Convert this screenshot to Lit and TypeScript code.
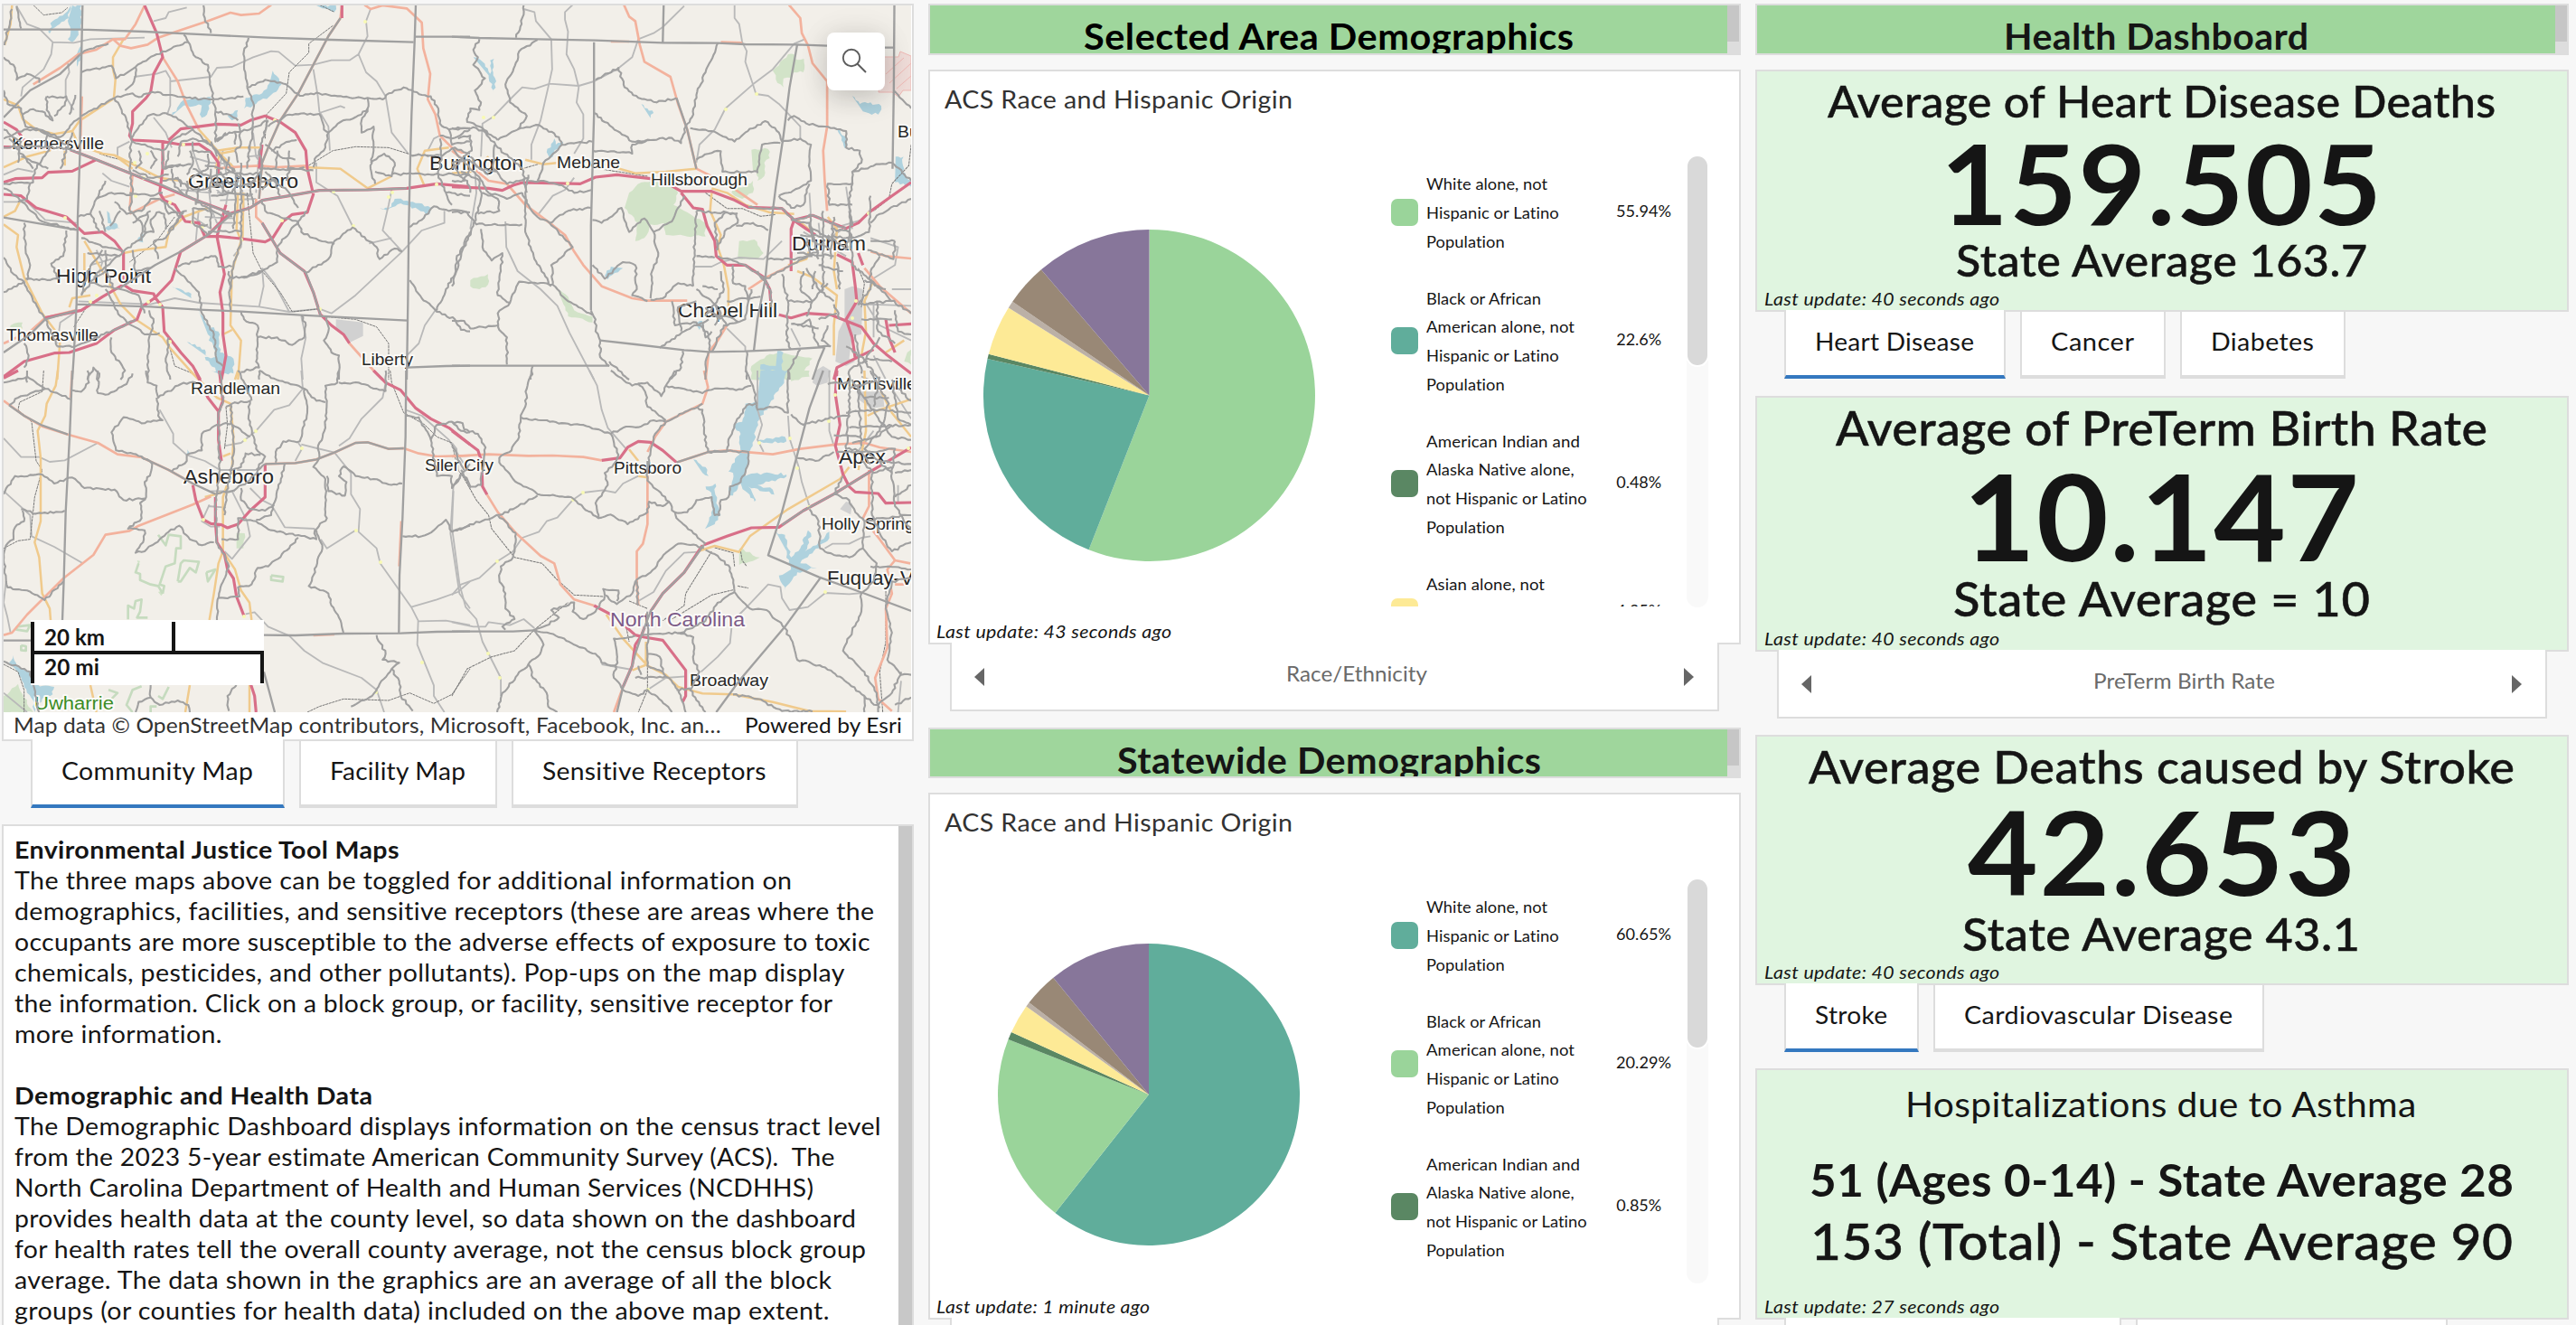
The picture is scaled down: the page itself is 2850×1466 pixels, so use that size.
import { LitElement, html, svg, css } from "lit";
import { customElement, property } from "lit/decorators.js";

/* ---------- text set to a fixed measure ---------- */
@customElement("fit-text")
class FitText extends LitElement {
  @property({ type: Number }) span = 0;
  static styles = css`
    :host { display: inline-block; white-space: pre; flex: none; text-align: left; }
    .ink { display: inline-block; transform-origin: 0 50%; }
  `;
  firstUpdated() {
    const ink = this.renderRoot.querySelector(".ink") as HTMLElement;
    const natural = ink.getBoundingClientRect().width;
    if (!this.span || !natural) return;
    const n = [...(this.textContent ?? "")].length;
    /* a third of the slack goes to tracking, the rest to the glyph width */
    const tracking = (this.span - natural) / 3 / n;
    ink.style.letterSpacing = `${tracking.toFixed(3)}px`;
    const tracked = natural + tracking * n;
    ink.style.transform = `scaleX(${(this.span / (tracked - tracking)).toFixed(4)})`;
    this.style.width = `${this.span}px`;
  }
  render() { return html`<span class="ink"><slot></slot></span>`; }
}

/* ---------- map geometry: one sheet per quadrant ---------- */
type Sheet = {
  at: string;
  water: string; green: string; works: string;
  county: string; tract: string; minor: string; rail: string;
  red: string; salmon: string; orange: string;
};

const SHEETS: Sheet[] = [
  {
    at: "scale(.33333)",
    water: `160,105 175,70 215,45 235,18 228,60 190,85 165,112;240,18 270,18 268,95 240,140 225,130 235,100 225,70;255,180 270,150 268,200 255,222;570,385 600,340 640,325 700,322 690,370 665,400 670,350 610,350;905,235 935,280 900,315 850,345 810,360 815,325 870,310 895,275;755,385 790,365 785,395 770,400;340,755 385,740 400,760 360,765;355,700 365,720 372,750 358,740;455,800 475,775 475,805;1260,690 1290,690 1310,660 1370,670 1430,690 1425,712 1330,675 1285,698;570,950 635,975 635,990;655,1020 690,1080 725,1100 730,1170 775,1190 775,1240 730,1245 680,1185 720,1185 690,1110;620,1135 680,1160 690,1185;1050,18 1115,18 1110,40 1070,28`,
    green: `35,1080 75,1070 75,1090 50,1100 30,1110`,
    works: `1115,1060 1205,1070 1205,1115 1165,1135 1115,1090`,
    county: `274,16 268,300 265,520 258,720 254,1010 245,1180 240,1260;12,98 270,98 480,105 700,116 890,125 1100,132 1372,140;1380,16 1376,140 1366,380 1362,520 1357,740 1354,1000 1350,1260;1376,122 1560,122;254,1010 500,1018 660,1028 800,1034 1000,1046 1160,1054 1352,1064;1350,1220 1480,1215 1560,1214;12,722 254,763;220,492 320,530 440,578 540,615 640,660 770,710;12,390 100,300 200,245 265,182;1130,60 1090,120 1040,215 990,310 930,400 890,490 870,540 860,660;870,740 930,840 1015,905 1040,970 1065,1050;690,780 600,835 515,880 400,955;690,780 770,710 830,690 870,665 960,650 1060,632 1220,630 1350,625;12,1170 100,1110 150,1060 254,1030`,
    tract: `55,20 70,95;40,30 15,150;12,190 50,225 55,265 90,245 130,260 130,275;265,182 290,165 360,145;12,300 25,345 70,360 85,420 130,430 200,455 240,410 270,390;155,320 155,365 175,400 140,370 110,362 75,380;155,320 190,325 220,320 215,350 180,385;250,315 230,380;270,240 300,232 370,218 385,260 450,222 520,180 625,140 610,115;450,222 445,270 415,300;625,140 650,190 690,215 700,290 715,370 715,470 750,440;675,16 680,60 700,110;825,125 808,180 820,290;808,320 770,325 705,330 620,325 560,315 505,305 460,322 440,310 380,325 270,385;820,290 840,340 838,420;820,290 880,265 950,280 995,318 1060,310 1100,318 1180,325 1220,325 1270,330 1290,310 1340,290 1400,315 1430,320 1455,360 1460,410 1490,430 1560,425;380,325 420,400 435,460 430,560 440,640 430,700;435,460 490,385 550,375;550,375 600,400 640,430 720,500 780,570;640,430 580,460 540,500 540,560;715,370 760,380 790,400;1220,325 1220,370 1200,400 1200,440 1240,420 1240,480 1230,560 1245,610;960,380 1060,378 1075,430 1090,440 1130,405 1200,380 1220,360;890,420 960,380;1090,440 1080,490 1050,520 1040,555;900,500 960,470 985,465;12,490 110,486 220,492;12,460 80,430 130,430;12,610 110,605 115,565 165,490;12,625 60,655 140,735 254,763;80,740 85,830 100,880 90,930;220,765 210,850 170,875 195,925 130,930 85,925;12,855 45,910 80,935 110,1000 150,1060 190,1150;258,720 300,710 320,660 350,600;300,710 330,770;330,700 350,770;400,700 365,750;270,790 340,820 410,835 470,790 490,770;380,670 420,710 470,700 500,660 530,660;490,710 480,770 510,770 500,730 520,705 545,710 550,760;530,660 600,720 550,790 510,800;510,800 525,860;12,970 80,935;190,1150 250,1150 300,1130 400,1085 450,1060;270,980 330,900 410,835;350,960 400,1050 480,1110 530,1105;580,890 660,970 670,1040 710,1110 720,1200 740,1215;590,885 700,850 715,850 725,885 770,885;765,920 820,920 870,900 920,870 920,820;1015,905 1090,860 1110,800 1170,755 1250,820 1260,860 1310,825 1335,835;990,735 1000,770 1040,790 1110,810;990,735 920,820;990,735 1020,700;870,665 880,700 940,725 990,735;1355,755 1400,730 1440,685 1470,695 1560,705;1360,930 1400,990 1450,1035 1510,1060 1530,1095 1560,1100;1450,1030 1480,960 1510,910 1515,860 1560,770;800,1035 810,1060 855,1080 855,1120 920,1120 970,1145 1010,1120 1015,1080 1000,1046;855,1120 850,1200 860,1220 800,1235;1085,1050 1090,1100 1075,1130 1100,1170 1125,1180 1125,1260;495,1030 510,1070 495,1120 490,1260;80,1140 95,1180 80,1220;290,1260 310,1220 330,1240 325,1260;400,1260 415,1230 370,1170 370,1120;560,1120 550,1200 565,1260;1230,540 1275,510 1310,540 1300,585 1245,570;1300,578 1420,578 1560,580;1360,515 1460,515;1460,460 1465,520 1455,580 1480,640 1560,650;1480,640 1500,680;1460,450 1500,460 1560,430;1465,520 1510,490 1560,510;630,500 640,545 620,580;635,545 580,550 545,555;690,510 690,560 630,590;680,550 740,560;760,520 750,560 800,590;780,500 790,540;860,500 870,560 820,620;830,480 820,560;920,500 915,560;960,500 955,560 1010,555;620,600 620,650;660,620 650,680;700,680 700,760;640,690 700,700;770,640 700,650;740,600 740,640;660,750 690,745;690,770 800,768;860,560 1040,565;780,600 780,700 775,760;830,600 840,680;560,500 550,555;460,500 470,540 450,560;500,500 520,530 500,560;540,600 590,590 600,620;790,410 800,480 780,500;840,420 830,500;890,400 870,470 860,500;880,480 930,520 980,530;720,470 760,440 830,430 890,400;900,600 870,630;440,565 500,590 560,580;580,590 640,630 690,625 740,610;700,600 760,640 830,650;640,560 700,590 770,570;880,570 960,640;960,640 990,690;640,470 640,500 700,505;600,470 590,520;440,470 470,480 540,500;320,660 370,640 440,650;350,830 350,900 380,960;290,840 400,850;430,700 470,740 470,800;440,830 450,900 500,890;400,960 460,980 480,1040;240,440 200,560;130,430 220,480;70,520 160,560;30,460 110,560;100,605 90,660 60,670;545,670 560,710 620,700;620,650 690,690 740,720;1490,430 1500,480 1560,470;1500,540 1540,600 1560,560;730,570 760,610 800,620 850,600;760,570 810,580 860,575;700,560 700,640;720,560 720,620;800,540 800,700;770,560 790,600 770,640;740,700 770,720;640,690 640,740 690,780;600,470 640,460 700,480 750,540;570,560 580,620 620,650;540,560 600,545;860,600 910,600 930,650;780,440 780,480;700,470 720,520;960,560 950,600;560,770 610,700;870,900 800,920;430,640 500,650 540,640;440,740 500,700;340,830 290,900 270,980;300,940 400,960;350,900 310,920;760,900 765,1030;12,430 70,470 60,540;160,440 150,490;800,700 800,800 775,880 765,960`,
    minor: `55,20 90,80 130,95 175,140 245,142 300,130 480,125;175,140 170,180 145,230 75,290 70,320;620,25 560,40 550,60 510,70;225,210 230,240 218,265 218,320 245,365;445,255 520,245 550,235 565,260 565,350 555,380;565,270 700,255 720,225 770,222 840,190 900,170 925,172 980,218 1040,215 1100,200 1160,200 1190,180 1220,120 1215,70 1230,30;1190,180 1215,240 1250,270 1280,320 1300,440 1355,510;1040,230 1055,320 1060,370 1090,420 1095,500;1050,540 1050,605 1120,650 1170,750;1300,630 1290,680 1270,765 1335,835;1225,808 1300,790;1475,700 1475,740 1400,765 1335,835 1180,980 1100,1040 1060,1025 960,1035 860,1018 660,1005 580,990 500,1010 260,1000;860,1018 875,950 870,890;870,890 910,940 960,1035;510,390 550,440 570,490;340,575 370,600;1060,375 1130,352 1145,358;1000,1050 1015,1120 1000,1190 1005,1260;1445,1030 1410,1080 1390,1140 1350,1180;640,500 660,560 690,600 740,650;650,640 720,600 740,500;840,440 850,520 880,560;720,640 840,645;730,665 850,660;760,620 750,680;800,580 810,700;660,690 650,800;700,690 720,740 800,740;800,790 800,820 775,850;370,600 430,620;320,830 340,870 320,930;300,880 370,860;190,1140 200,1070 260,1030;12,670 90,670 150,730 254,740;1420,500 1440,460 1460,450;390,520 390,490 430,470;600,630 700,640;12,580 60,560 110,570;680,720 780,725;740,520 760,620;860,500 850,640;630,520 700,540 770,545;690,600 700,690;820,520 870,515;640,720 700,760`,
    rail: `110,16 145,50 205,42 225,25;1105,85 1025,145 1025,175 960,240 950,310 885,380 880,460;1015,555 1105,500 1180,487 1290,490 1370,515 1430,515;820,640 840,840 870,900 930,970 970,1035 1060,1025;1065,1050 1180,1060 1250,1085 1290,1140 1290,1260;330,510 360,520 440,540 500,580;245,1085 300,1000;580,720 520,800 430,870;560,1140 580,1215 640,1240;1060,16 1110,40`,
    red: `480,18 520,110 540,190 510,245 500,305 485,325 440,370 440,410 430,450 440,465 540,470 600,480 660,478 700,505 725,540 725,580;12,405 55,430 80,465;12,488 220,492 320,530 440,578 530,615 640,660 760,705;12,605 50,593 140,590 160,572 240,568 320,530;12,645 70,650 120,690 220,720 280,775 340,770 380,800 410,840 410,945 440,965 510,975 515,988;540,470 540,560 530,640 545,665 580,680 615,735 660,740 680,785 730,785 800,792 880,803 905,790 940,735 970,712 1020,705 1040,645 1020,560 1015,500 980,440 930,405 880,385 830,400 800,415 720,412 600,428 560,465;750,680 720,785 735,860 745,910 730,970 740,1040 740,1110 750,1180 735,1260;690,780 760,710 830,690 870,665 960,650 1060,632 1220,630 1350,625 1450,610 1560,620;1065,1045 1100,1080 1140,1110 1160,1140;870,740 930,840 1010,900 1040,970 1065,1050;690,780 600,835 570,930 515,988;515,988 540,1020 545,1100 600,1170 640,1215 665,1260;515,988 470,1020 455,1060 380,1095 320,1140 230,1170 180,1172 80,1200 12,1250;410,945 340,985 270,1030 150,1055;1240,1230 1270,1260;1135,16 1135,60;870,480 860,560`,
    salmon: `900,16 860,45 800,50 765,42 690,70 600,100 525,125 490,148 435,160 400,152 375,130 320,165 260,180 200,225 110,280;480,18 450,80 415,130 375,130;540,190 590,270 620,350 660,430;1210,16 1230,30 1270,18 1350,28 1400,75 1405,160 1428,245 1420,330 1445,380 1460,450 1500,490 1560,520;1135,16 1130,60 1090,120 1040,215 990,310 930,400 890,490 870,540 860,660;850,660 850,720 870,740;720,560 760,555 860,550 920,555 1020,550;430,710 530,660 580,645;1160,1140 1240,1230;12,1140 100,1100 150,1055 250,1030;440,578 430,700;272,320 266,500`,
    orange: `410,130 375,190 375,230 383,265 378,325;40,16 35,80 15,150;12,330 60,350 75,395 120,430 180,445 240,435 265,400 380,325;12,555 90,520 165,500 200,470;215,500 215,550;380,515 440,545 530,590 600,600;240,435 260,480 340,510 380,515 440,560;12,720 50,700 65,670;12,745 60,780 55,820 80,920 140,1040 200,1120 190,1260;1010,555 1130,560 1220,625 1300,585;1410,620 1385,560 1410,500 1490,490;410,840 460,830 550,820 560,770 610,720 690,690;230,1020 240,990 300,980;280,800 340,900 400,1010 450,1060 540,1120 560,1150 640,1240;790,640 785,760 800,800 770,900 765,1080 800,1130 790,1260;660,430 740,520 780,560;720,500 790,490 870,490;808,640 805,800;740,1110 770,1095;280,840 280,970;780,500 730,510 715,560`,
  },
  {
    at: "translate(500 0) scale(.33806 .33333)",
    water: `70,190 100,205 125,245 125,200 138,195 135,250 145,270 135,310 120,250;620,345 640,360 660,375 650,392;1310,318 1335,345 1370,340 1405,352 1395,380 1345,370;1255,415 1270,430 1295,480 1285,492 1265,440;310,505 335,460 340,480 365,470 320,525;1452,520 1478,520 1475,570 1503,600 1503,620 1450,605;500,915 520,885 560,890 510,928;1065,1165 1085,1170 1080,1260 1000,1260 1010,1210 1060,1215;795,1070 820,1065 810,1095`,
    green: `1050,235 1075,205 1100,180 1120,180 1122,195 1152,195 1150,240 1120,240 1110,258 1085,260 1085,290 1065,275 1060,250;980,497 1035,495 1040,525 1022,540 1022,585 1000,600 1000,570 985,565;580,640 620,605 700,600 740,640 725,680 760,700 830,740 830,785 700,780 695,740 650,745 630,790 600,800 610,740 565,690;920,625 960,620 985,600 985,640 950,660 915,640;940,800 990,795 1020,840 1000,860 935,860;60,930 118,910 118,945 90,960 60,950;345,960 380,985 400,1030 460,1050 460,1070 380,1050 365,1010;1000,1200 1040,1175 1100,1175 1180,1190 1150,1240 1120,1260 980,1260 980,1215;1490,1170 1503,1160 1503,1210 1480,1200`,
    works: `1285,960 1310,950 1345,960 1340,1110 1310,1115 1300,1190 1320,1200 1290,1215 1255,1200 1265,1100 1285,1060;1190,1230 1215,1215 1240,1230 1230,1260 1190,1260`,
    county: `0,122 90,126 280,130 470,134 690,142 870,143 960,147 1130,148 1230,152;1415,158 1446,158;465,140 465,380 460,560 455,750 455,1030;693,16 690,140;1130,148 1105,290 1085,450 1060,620 1040,780 1025,930 1000,1060 988,1165;1448,16 1446,300 1442,560;485,1130 600,1143 760,1162 840,1168 960,1166 1100,1160 1220,1152;0,1214 515,1214;735,325 770,430 800,560;1220,1152 1200,1200 1180,1260`,
    tract: `455,1030 470,1060 470,1100 485,1130 485,1185 515,1215;235,16 228,80 210,125;90,130 70,165 85,190 70,215 108,260 75,300 95,340 90,365 60,360 50,405 90,420 150,465;280,132 220,170 215,200 175,280 190,340 245,385 215,430 150,465;215,430 285,415 350,455 360,480 460,470;465,375 500,405 590,470 650,465 720,458 750,475 765,420 790,380 800,315 830,240 870,143;470,265 545,225 565,290 610,325 670,340 735,325;780,425 850,435 925,470 960,440 1025,402 1070,440 1080,470;0,425 80,425 110,440 150,490 230,560 245,640;1080,470 1140,460 1175,480 1170,540 1175,600 1100,640 1070,650;1000,575 1015,480 1075,475;800,530 840,510 880,502 885,570 1000,570;1100,400 1120,385 1160,410 1220,420 1290,435 1290,490 1335,500 1340,540 1310,570 1400,545 1440,540 1503,600;1310,600 1300,680 1310,750;1310,570 1310,610 1230,610 1235,680 1310,680;1070,650 1110,690 1150,680 1170,610;460,500 560,505 590,510 590,480 650,465;0,490 80,580 120,640 180,660 230,640;20,460 60,450 65,500 0,560;90,600 95,660 70,750 30,850 0,950;0,705 50,705 80,745 230,745;250,580 240,640 240,770 270,860 325,950;330,945 220,935 190,1005 150,980 160,900 165,840 130,865 100,820 95,760;230,640 255,690 280,720 320,740 395,820 350,860 325,880 330,945 380,1000 460,1045;320,740 380,700 455,690;460,630 400,640 360,615 300,600 250,600;190,1005 150,1040 155,1095 180,1120 180,1210;0,1065 40,1065 60,1090 150,1080;460,730 490,740 555,690 580,770 630,725 660,770 720,735 740,690 760,650;660,770 675,850 655,900 650,990;460,880 500,925 560,870 600,880 605,960 590,980 640,1000;790,950 795,800 800,700;650,995 690,990 740,940 790,950;800,700 860,705 900,705 935,708;865,830 900,760 935,740 930,710 895,705 860,740 870,830;930,750 985,740 1035,765;720,1000 730,1080 800,1070 840,1110 845,1168;680,1155 760,1100 840,1060;850,1168 890,1080 960,1060 980,960;800,960 860,1010 830,1050;880,900 890,960 860,1010 900,1080;920,880 920,940 960,950 970,1000;1000,900 1020,930 1110,880 1200,830;870,850 960,880 1020,920 1045,970 1045,1020;1110,1160 1095,1130 1100,1000 1080,910;1100,1000 1180,1000 1230,940;1200,1090 1110,1075;1140,1160 1100,1230 1105,1260;965,1166 965,1260;755,1165 750,1220 710,1260;265,1214 258,1260;515,1200 560,1245 580,1260;840,1168 830,1200 830,1260;1110,730 1170,740 1200,860;1170,710 1180,800 1240,830;1250,720 1240,860;1215,700 1215,900;1140,780 1320,790;1130,840 1250,850;1300,700 1310,880 1370,930 1430,990 1503,1040;1370,650 1365,770 1310,790;1503,660 1400,710 1370,740;1450,800 1370,800;1450,800 1445,860 1360,830;1160,890 1200,960 1250,1000;1260,870 1270,960;1200,880 1280,900;1370,900 1370,960 1330,1010 1440,1000;1390,1000 1395,1100 1450,1140;1320,1110 1340,1240;1230,1080 1210,1130 1240,1150;1290,1150 1360,1200;1400,1120 1350,1200 1400,1260;1445,300 1503,360;970,688 1080,692 1120,730 1180,715 1230,735 1290,758;1035,860 1110,860 1180,850;900,1000 960,990 1010,985;750,1100 740,1020 800,1000;820,1070 830,1120 850,1100;850,1050 900,1050 940,1070;140,480 135,560 180,610 250,590;0,540 50,530 120,580;100,640 150,660 155,700 85,710;360,480 300,540 280,600;1150,900 1140,960 1180,1000 1160,1050;1200,1060 1260,1040;1180,1100 1200,1150 1240,1150;1450,1030 1460,1100 1503,1110;1300,1230 1360,1190 1440,1200;1230,780 1290,830;60,520 90,560 150,570;30,570 90,600;0,600 50,600 60,640;860,1010 880,1040 860,1080;830,1020 880,1060;1240,760 1300,770 1290,830;1180,760 1250,800;1160,790 1170,850;1190,900 1180,960;1220,900 1210,970;800,850 860,855;1250,1010 1270,1060;1350,930 1420,960;1400,850 1370,900;1340,1060 1440,1060;1130,1080 1170,1060 1180,1100;820,950 870,960`,
    minor: `235,30 270,40 275,70 325,130 328,230 315,290 290,400 260,480 260,530;395,16 370,40 370,65 380,105 375,180 400,230 415,290 408,340 430,380 430,460 400,510;135,388 190,330 230,290 270,295 320,278 415,285 465,270 540,230 590,190 610,130 660,110 690,90 760,20;135,388 100,410 95,520;925,16 925,60 940,80 950,140 965,170 960,205 985,280 995,312 1035,318 1070,345 1140,420 1140,460;1155,130 1120,145 1050,230 985,280 895,360 860,430 810,480 800,540;175,735 178,820 215,900 290,960 345,1015 385,1105 465,1260;280,715 330,650 370,630 400,590;900,1090 960,1150 960,1166;795,885 850,885 880,870 940,855 1020,860 1080,800;1370,930 1450,880 1460,820 1370,790;1360,1010 1503,1015;1110,1090 1140,1150;75,560 80,640 60,760;1170,640 1175,720;1290,620 1310,760;1350,1000 1400,1080 1503,1130;1440,960 1503,960;1380,1180 1420,1260;1200,740 1210,830;1240,760 1340,730;1150,770 1290,850;1190,820 1280,760;1380,1010 1380,1120`,
    rail: `480,560 640,585;830,640 900,692 950,692 1010,718 1060,712;1503,480 1495,550 1440,610 1430,660 1380,700;1330,890 1350,940 1340,1020;230,560 300,540`,
    red: `0,620 120,625 165,632 200,615 230,606 420,610 470,588 540,580 650,593 690,600 750,635 850,635 920,662 970,688 1080,692 1120,730 1180,715 1230,735 1290,758 1330,740 1365,705 1440,650 1503,605;750,640 790,690 820,695 835,750 860,800 865,850 900,880 960,880 1020,920 1040,960 1045,1020;1120,730 1110,760 1110,900;1260,845 1310,870 1320,950 1325,1000 1290,1060 1310,1120 1320,1190;1070,1045 1110,1055 1160,1040 1240,1045 1290,1065 1340,1085 1380,1140 1420,1175 1503,1240;1330,840 1345,880;1420,1060 1430,1120 1450,1170;1430,1080 1503,1075;1250,1260 1260,1220 1320,1190 1380,1160;1110,725 1160,760 1190,780`,
    salmon: `563,16 580,55 600,70 615,150 630,205 715,255 740,345 770,430 800,560;1165,150 1180,210 1228,270 1228,420 1215,500 1220,600 1228,700;800,560 900,610 1000,680;0,500 120,600 180,610 240,680 320,740 370,780 400,835 430,880 490,950 590,990 640,998 770,998;1103,16 1140,60 1145,110 1165,150;1370,835 1420,850 1503,858;1350,890 1400,950 1503,1040;840,1170 830,1260;970,960 1030,920 1110,880;900,1080 870,1130 840,1170;520,138 580,138;880,140 950,142`,
    orange: `240,530 300,545 400,535 460,535 530,555 600,575 700,570 800,560;850,640 845,700 880,780 870,820 890,880 905,960 905,1040;850,625 900,640 960,680 1040,705 1120,710;1100,880 1160,860 1180,800;1130,900 1180,920 1220,950 1260,980 1250,1080 1250,1180;1230,720 1260,760 1250,900 1260,960;1380,930 1350,1000 1355,1100 1340,1180;1420,1170 1480,1130;1130,730 1180,770;0,575 60,570 120,520`,
  },
  {
    at: "translate(0 410) scale(.33333)",
    water: `30,970 45,945 55,980 100,1000 105,1040 180,1050 175,1075 140,1090 115,1134 110,1095 80,1050 60,1000;615,280 622,262 640,275;700,0 760,0 740,16`,
    green: `785,540 812,540 808,590 785,590;12,1080 60,1040 75,1075 110,1134 12,1134;525,735 540,730 535,748;455,630 465,632 460,645`,
    works: ``,
    county: `240,0 232,200 218,470 212,690 207,830;1348,0 1346,220 1336,490 1326,680 1324,870;876,878 980,879 1140,873 1330,872 1450,867 1560,866;12,896 104,896;876,1000 912,1134;30,115 80,150 140,182 225,212;470,288 560,330 640,375 715,410;880,310 980,307 1050,295 1110,272 1180,240 1220,238 1290,260 1340,258`,
    tract: `12,40 90,20 150,60 235,95;90,0 90,40;150,60 60,90 30,115;240,65 270,70 295,40 290,0;325,0 325,75 350,80 420,45 440,10;485,0 490,40 520,50 525,90 600,45 650,40;520,90 525,150 540,165 470,175 410,155 370,205 385,265 470,285 505,310 500,340 480,370 485,420 465,440 470,490 425,525 480,530 475,570 450,605 480,600 530,560 560,535 595,515 630,560 670,580 710,570;570,335 620,300 620,280 670,265 670,210 720,180 770,175;730,0 740,100 725,150 730,330 720,410 715,470 718,570 745,610 760,650 735,710 722,760 720,828;715,410 770,400 820,370 880,310;750,120 770,110 830,100 825,150 850,260 880,285 850,330;765,110 770,180 775,280 750,420 745,480;860,0 900,25 1010,60 1020,140 1005,190 995,235 940,235 915,270 915,305;1125,0 1120,40 1080,50 1085,100 1080,190 1055,260 1060,290 1040,320 1080,360 1080,470 1085,490 1045,530 1050,560 900,530 850,500 790,490 790,560 735,560;1125,40 1190,40 1240,60 1280,70;945,310 910,440 900,480 850,495;1010,60 1050,100 1080,105;770,180 830,220;800,390 800,430 830,460 880,465 910,445;760,330 800,320 815,275 865,280;1085,350 1090,400 1145,415 1150,370 1125,350 1140,318 1180,350 1240,360 1290,378 1335,375;990,555 960,590 890,650 855,655 835,710 790,720 795,750 725,755;1050,530 1070,590 1050,650 1025,715 1090,740 1100,780 1125,820 1140,870;12,410 50,350 140,345 180,375 240,355 280,390 380,395 410,430 480,425;70,460 120,475 215,465;75,465 80,500 50,520 45,560 20,580 12,630 25,720 90,730 148,762 210,700;1336,550 1400,550 1440,530 1480,495 1500,535 1560,515;1345,150 1390,155 1430,230 1450,180 1500,170 1530,200 1560,205;1430,230 1450,350 1500,350 1500,390 1560,310;1530,330 1560,390;1250,878 1280,940 1270,960 1325,970 1300,990 1260,1040 1235,1080 1165,1115;1300,990 1325,1030 1330,1080 1370,1130;450,1134 460,1100 500,1085 530,1110 590,1095 625,1110 630,1134;500,1044 500,1085;785,1044 755,1080 760,1130;12,965 100,1000 130,1134;1280,0 1280,70;860,0 860,30;790,0 820,60 835,100`,
    minor: `12,225 70,287 130,287 165,303 215,298 325,240;848,202 910,130 960,115 1005,60 1000,0;848,202 800,240 745,250;620,280 680,300 730,330 850,330;530,130 575,210 575,240 620,280;1280,40 1270,90 1200,160 1160,225 1125,250;1000,245 1040,255 1110,272 1165,340 1165,410 1195,460 1190,535 1250,590 1262,640 1365,785 1388,830 1385,910 1440,1045 1440,1080 1475,1134;1365,785 1450,760 1520,735 1560,700;1390,832 1480,830 1560,845;1505,380 1495,540 1525,740 1560,790;1180,530 1085,590 1065,560;1045,525 945,520 900,445 870,430 830,390;12,400 100,480 105,550 180,585 275,640;815,808 845,802 890,850 960,880 1010,930 1070,970 1200,1020 1250,1060 1275,1134;35,870 25,820 12,770 20,700;695,445 670,500 700,518 730,518;770,400 820,500 830,550 770,625 745,600;1345,130 1400,150 1490,230 1540,310;980,300 1003,258 990,240;12,1070 90,1134;700,400 780,400;690,450 750,455`,
    rail: `145,0 140,70 65,105 60,130 105,170 120,300 140,330 115,420 100,560 60,565 12,590;1295,0 1300,40 1340,140 1410,180 1450,220 1500,240 1520,330 1560,380;750,120 755,180 745,260;1020,1134 1060,1115 1140,1090 1290,1095 1360,1070 1440,1105 1500,1075 1560,990;12,975 60,1000 80,1060 80,1134`,
    red: `728,0 735,60 740,100 725,140 725,230 735,300;648,0 690,90 725,135;12,25 60,0;640,380 650,430 675,495 700,508 735,512 755,522 790,510 830,465 880,420 880,310;715,420 715,500 720,570 745,610 755,660 775,690 785,750 810,815;1240,0 1280,40 1330,65 1380,125 1430,160 1490,190 1560,245;832,1040 845,1080 850,1134`,
    salmon: `12,100 80,150 140,185 225,212 325,240 390,278 470,288 560,330 640,375;880,310 980,307 1050,295 1110,272 1180,240 1220,238 1290,260 1340,258 1390,275 1450,285 1560,282;700,418 640,445 460,515 430,532 350,545 310,612 210,690 90,810 40,870 12,878;1332,500 1325,650;240,0 234,90;1040,879 1110,876`,
    orange: `192,0 185,50 155,110 150,150 125,200 135,290 135,500 115,570 130,620 140,740 165,790 168,828;630,0 720,90 765,110 775,220 770,330 740,420 740,600 725,640 710,740 695,828;740,600 780,660 800,730 828,770 835,828;735,405 680,420;790,0 780,30;740,285 765,275;300,1044 320,1134;630,1044 615,1134;828,1040 828,1134`,
  },
  {
    at: "translate(500 410) scale(.33806 .33333)",
    water: `1010,0 1100,0 1080,50 1040,110 1000,170 990,230 970,300 960,350 1030,338 1095,345 1095,352 1000,380 1050,395 1055,412 1000,392 970,385 995,430 990,435 960,400 945,375 920,415 905,410 920,340 905,335 940,280 945,210 920,185 950,170 960,110 1000,100;1000,232 1090,220 1095,235 1020,240;828,525 850,480 850,415 830,385 862,375 865,440 880,480 860,510;790,295 830,320 840,350 820,340;1060,535 1090,545 1110,620 1140,590 1165,530 1175,540 1155,600 1200,570 1235,535 1230,565 1170,610 1140,640 1195,655 1130,670 1110,700 1090,730 1070,680 1110,660 1090,590`,
    green: `985,0 1060,0 1040,60 1010,30;1105,0 1170,0 1170,20 1110,35;940,590 1008,620 960,640 940,645`,
    works: `1325,70 1410,70 1415,120 1370,125 1330,95;1190,0 1230,0 1230,40 1195,50 1180,40;1270,460 1290,435 1310,440 1305,478`,
    county: `0,866 200,866 270,862;1215,0 1170,125 1130,280 1080,470 1035,613 1200,685 1345,738 1503,798;1208,685 1090,850 940,1030 865,1134;825,578 760,670 690,740 650,800 620,880 600,940 590,980 560,1050 540,1134;1080,512 1150,465 1250,410 1370,335;735,305 840,270 900,268`,
    tract: `260,0 245,60 240,120 225,160 220,220 195,265 155,290 155,305 200,360 280,410 390,420 430,455 480,490 520,478 575,510 640,470 645,435 690,450 710,435 640,365 640,300;0,170 35,175 40,195 85,210 110,255 95,380 60,385 35,340 0,390;225,155 320,170 420,180 520,210 560,190 620,185 660,165 700,170;520,0 545,20 590,50 640,40 680,75 685,85 730,0;610,40 635,80 640,120 700,165;700,50 820,75 840,65 890,60 930,65 980,50;520,210 545,280 530,310 500,340 510,380 470,440 480,490;820,110 700,170 665,210 650,270 640,330;805,125 820,130 825,200 838,270 900,268 970,270 970,310 945,370 910,385 905,420 880,430 875,480 860,480 850,420 800,430 770,470 730,470;900,265 910,220 930,170 965,115 1000,110;960,0 985,50 1000,130 1060,120 1100,140 1100,0;710,435 735,490 790,540 830,575;830,595 870,615 910,655 925,735 975,790 1030,795 1090,855 1120,920 1130,960 1165,965 1240,995 1300,1040 1350,1080 1400,1120;600,700 650,670 700,605 740,575 800,580 825,590;600,700 590,740 540,775 500,745 495,725 545,730 540,765;500,750 470,800 430,825 395,800 400,770 325,795 350,820 300,850 270,860;210,540 200,620 160,650 155,690 175,740 175,790 205,825 165,850 175,860;0,535 60,510 130,490 200,460 280,415;150,480 210,540;265,860 300,910 280,950 250,975 265,1020 310,1070 315,1115 345,1134;270,860 340,880 400,910 470,940 490,970 540,985;250,975 215,1010 165,1070 148,1134;740,870 790,885 790,960 810,1000 780,1060 830,1134;620,880 750,870 830,830 870,770 925,735;600,880 530,890 540,960 530,1020 560,1060 610,1080 640,1060 700,1110 720,1134;735,1060 780,1055;610,780 605,700;640,800 640,980 690,1000 740,1060 765,1134;1110,145 1150,180 1230,160;1130,290 1190,300 1250,270;1280,350 1250,410 1300,430 1320,470 1350,500;1170,460 1200,500 1205,590 1230,605 1300,620 1345,590 1350,500 1400,490 1503,480;1345,590 1390,640 1380,700 1340,740 1340,800 1280,930 1350,1000 1390,1070 1395,1134;1375,340 1375,480 1400,540 1440,600 1503,570;1370,650 1430,650 1503,660;1503,690 1440,700 1420,780 1440,870 1425,960 1470,1010 1503,1010;1395,1110 1440,1070 1470,1000;1440,340 1450,450 1503,530;1350,1080 1350,1134;1300,0 1300,120 1290,260 1380,270;1330,60 1340,250;1290,140 1400,130 1503,140;1300,190 1503,180;1310,30 1390,150 1440,220 1503,230;1380,270 1450,260 1440,340 1350,260 1400,200 1430,110 1370,0;920,1075 1000,1090 1080,1130 1180,1132;1450,1110 1503,1085;1220,160 1300,150;1250,215 1340,220;1400,20 1380,120;1440,30 1460,160 1503,180;1260,270 1340,270 1370,310;1400,300 1503,310;1450,420 1503,380;1230,45 1300,40;0,250 40,330;600,1020 700,1015;610,980 620,1010;640,940 680,950 690,1000;1300,60 1390,30;1350,90 1430,90;1340,300 1380,340 1440,320;1450,340 1503,330;1460,60 1503,100;1310,240 1390,220 1440,180`,
    minor: `450,0 475,50 490,130 510,190 570,260;610,350 560,375 535,405 495,397 430,405 395,430 345,488 310,500 285,535 230,555 200,600 150,632 90,688 30,710 0,745;5,400 0,520 25,710 45,785 80,825 100,900 160,1020 160,1080;0,835 70,850 110,850 120,835 190,845 235,825 270,855;805,602 760,605 700,665 660,735 610,765;1000,0 1000,130 1015,180 1000,230 1020,270;1100,150 1105,225 1135,320 1145,370 1170,450;1235,0 1235,200 1250,250;1220,590 1245,575 1300,575 1340,555 1370,550;940,810 970,780 1035,710 1075,718 1080,755 1105,795 1165,785 1222,738 1300,742 1345,738;915,855 910,905 870,950 815,1000;640,1060 700,1020 765,1015;490,975 590,993;1470,1030 1460,1134;0,240 15,260 20,330;1340,20 1440,60 1503,160;1460,380 1460,440;1320,280 1380,200`,
    rail: `30,340 80,430 120,480 130,525 205,620 295,640 340,690 400,745 500,750;850,600 765,740 760,780 690,830;920,728 850,745 720,825;0,1080 50,990 130,950 205,930 270,860 380,770;640,1060 610,1134;640,930 640,1060;560,800 580,900;1420,720 1420,900 1400,1000 1410,1134;860,588 920,605 925,650;945,600 950,630 965,650;935,715 970,722;580,765 640,790`,
    red: `0,200 85,265 97,300 100,385 115,412;490,298 550,290 575,255 610,235 650,238 690,265 735,305;825,578 900,550 980,522 1070,520 1150,465 1250,410 1370,335 1503,255;820,580 760,670 690,740 650,800 620,880 600,910;465,780 530,815 600,878 630,885 690,895 720,935 765,995 765,1080 755,1100;1260,0 1255,80 1270,180 1255,250 1280,345 1300,385 1320,403 1395,408 1420,440 1503,438;600,910 590,980 560,1050`,
    salmon: `0,285 120,278 250,283 330,282 430,287 490,298;735,305 840,270 900,265 1050,278 1140,260 1260,245 1350,240 1400,255 1503,270;640,340 640,510 625,575 605,600 605,700 610,780;115,412 150,470 210,540 290,615 335,640 355,710 400,760 465,780;825,0 838,55 820,110 700,170 665,220 640,270;1365,330 1365,450 1345,490 1400,560 1450,630 1500,640;1450,630 1425,660 1440,740 1420,790 1425,920 1385,1020 1395,1090 1440,1130;560,1050 530,1134;1450,710 1480,710 1503,680`,
    orange: `580,262 610,300;610,350 640,355;805,600 860,582 940,602 975,550 1100,460 1270,360 1300,320;505,810 560,890 640,980 700,1010 740,1050 820,1072 920,1075 1050,1100 1170,1130 1290,1132;640,975 590,995;635,900 635,975;1350,0 1355,200 1330,330;1503,95 1460,110 1400,130 1360,150;1400,60 1440,140 1503,220`,
  },
];

const HOLLOW = `525,545 550,580 560,545 600,550 600,590 585,590 580,640 550,650 530,710 545,715 540,740;540,740 525,715 500,710 465,695 465,675 450,670 460,640;590,700 600,640 610,630 660,635 650,670 630,655 600,700 590,700;685,670 715,660 690,700 685,670;900,680 940,685 938,700 900,695 900,680;425,826 425,780 445,790 450,765 470,760 465,800 455,820 490,820;55,850 100,845 90,865 55,860 55,850;70,912 86,915 86,930 70,928 70,912;470,1048 440,1060 420,1110 440,1134;560,1050 540,1090 525,1080;360,1060 390,1070 370,1090;500,1134 500,1115 520,1115`;

const TOWNS_DOTS = `163,170;149,180;72,241;304,133;404,24;434,213;369,212;430,218;483,204;546,130;837,104;803,121;535,130;628,203;961,236;947,333;943,352;188,224;213,246;177,337;100,334;107,327;164,334;188,378;150,217;159,197;224,251;267,265;312,244;354,342;391,250;203,160;283,477;271,487;334,496;225,575;394,587;421,622;467,733;270,682;645,545;634,553;550,621;540,723;913,655;840,490;874,485;882,518;917,466;924,437;1005,496;895,561;553,750;416,766;717,763`;

const num = (n: number) => n.toFixed(1);

const trace = (data: string, closed = false) =>
  data.split(";").filter(Boolean).map((l) => "M" + l.trim().split(" ").join("L") + (closed ? "Z" : "")).join("");

/* Boundaries follow creeks and ridges, so each leg is broken into short, slightly displaced steps. */
const meander = (data: string, step: number, amp: number) =>
  data.split(";").filter(Boolean).map((line) => {
    const pts = line.trim().split(" ").map((p) => p.split(",").map(Number));
    let d = `M${pts[0][0]},${pts[0][1]}`;
    for (let i = 1; i < pts.length; i++) {
      const [x0, y0] = pts[i - 1];
      const [x1, y1] = pts[i];
      const len = Math.hypot(x1 - x0, y1 - y0) || 1;
      const n = Math.max(1, Math.round(len / step));
      for (let k = 1; k < n; k++) {
        const t = k / n;
        const s = Math.sin((x0 + y1) * 12.99 + k * 78.2) * 43758.5;
        const off = ((s - Math.floor(s)) - 0.5) * 2 * amp;
        d += `L${num(x0 + (x1 - x0) * t - ((y1 - y0) / len) * off)},${num(y0 + (y1 - y0) * t + ((x1 - x0) / len) * off)}`;
      }
      d += `L${x1},${y1}`;
    }
    return d;
  }).join("");

type Label = [string, number, number, number, number, string?];
const LABELS: Label[] = [
  ["Kernersville", 13, 164.5, 102, 18.5],
  ["Greensboro", 208, 208, 122, 22],
  ["High Point", 62, 313, 105, 22],
  ["Thomasville", 7, 377, 102, 18.5],
  ["Liberty", 400, 404, 57, 18.5],
  ["Burlington", 475, 187.5, 104, 22],
  ["Mebane", 616, 186, 70, 18.5],
  ["Hillsborough", 720, 204.7, 107, 18.5],
  ["Durham", 876, 276.7, 82, 22],
  ["Chapel Hill", 750, 351, 110, 22],
  ["Morrisville", 926, 430.7, 88, 18.5],
  ["Butner", 993, 152, 57, 18.5],
  ["Randleman", 211, 436, 99, 18.5],
  ["Asheboro", 203, 535, 100, 22],
  ["Siler City", 470, 520.7, 76, 18.5],
  ["Pittsboro", 679, 524, 75, 18.5],
  ["Apex", 928, 513, 52, 22],
  ["Holly Springs", 909, 585.7, 112, 18.5],
  ["Fuquay-Varina", 915, 646.7, 143, 22],
  ["North Carolina", 675, 693, 149, 22.5, "#7d5b88"],
  ["Broadway", 763, 758.7, 87, 18.5],
  ["Uwharrie", 38, 784.7, 88, 20, "#3b8c25"],
];

@customElement("area-map")
class AreaMap extends LitElement {
  static styles = css`
    :host { display: block; position: relative; height: 782px; background: #f2efe9; overflow: hidden; }
    .canvas { display: block; width: 1004px; height: 782px; }
    .water { fill: #afd2de; }
    .green { fill: #d2e3c8; }
    .works { fill: #d1d1d1; }
    .zone { fill: #efdcd8; stroke: #efb9b5; stroke-width: 1; }
    .line { fill: none; stroke-linejoin: round; }
    .hollow { stroke: #c6dbbf; stroke-width: 8; }
    .minor { stroke: #b9b9b9; stroke-width: 5.5; }
    .rail { stroke: #777; stroke-width: 3; stroke-dasharray: 9 2; }
    .orange { stroke: #f0ca8c; stroke-width: 7.5; }
    .salmon { stroke: #f3b29d; stroke-width: 8; }
    .red { stroke: #d86f88; stroke-width: 9.5; }
    .county { stroke: #a0a0a0; stroke-width: 7; }
    .tract { stroke: #a0a0a0; stroke-width: 6.3; }
    .dot { fill: #f8fab4; }
    .name { font-family: "Liberation Sans", Arial, sans-serif; stroke: #fbfaf7; stroke-width: 4; stroke-linejoin: round; paint-order: stroke; }
    .search { position: absolute; top: 30px; right: 29px; width: 64px; height: 64px; border-radius: 8px; background: #fff; box-shadow: 0 8px 30px rgba(0,0,0,.18), 0 0 40px rgba(0,0,0,.05); }
    .glass { display: block; width: 64px; height: 64px; fill: none; stroke: #5d5d5d; stroke-width: 1.9; }
    .scale { position: absolute; left: 30px; bottom: 30px; width: 258px; height: 72px; background: #fff; color: #151515; box-sizing: border-box; padding-top: 2px; font: 700 24px/32px Lato, "Open Sans", sans-serif; }
    .km { box-sizing: border-box; width: 160px; height: 32px; border-left: 4px solid #151515; border-right: 4px solid #151515; padding-left: 11px; line-height: 34px; }
    .mi { box-sizing: border-box; height: 36px; border: 4px solid #151515; border-bottom: 0; padding-left: 11px; line-height: 28px; }
  `;
  render() {
    return html`
      <svg class="canvas" viewBox="4 6 1004 782" aria-label="Map">
        ${SHEETS.map((s) => svg`<g transform=${s.at}>
          <path class="green" d=${meander(s.green, 12, 4)}></path>
          <path class="water" d=${meander(s.water, 10, 5)}></path>
          <path class="works" d=${trace(s.works, true)}></path>
        </g>`)}
        <path class="zone" d="M972 102L978 63L994 63L996 57L1008 62V100L999 100L994 107L987 102Z"></path>
        <path class="zone" d="M980 82L1000 64M984 92L1008 70M992 98L1008 84"></path>
        <g transform="translate(0 410) scale(.33333)"><path class="line hollow" d=${trace(HOLLOW)}></path></g>
        ${SHEETS.map((s) => svg`<g transform=${s.at}>
          <path class="line minor" d=${trace(s.minor)}></path>
          <path class="line rail" d=${trace(s.rail)}></path>
          <path class="line orange" d=${trace(s.orange)}></path>
          <path class="line salmon" d=${trace(s.salmon)}></path>
          <path class="line red" d=${trace(s.red)}></path>
        </g>`)}
        ${TOWNS_DOTS.split(";").map((p) => {
          const [x, y] = p.split(",");
          return svg`<circle class="dot" cx=${x} cy=${y} r="2"></circle>`;
        })}
        ${LABELS.map(([t, x, y, w, size, fill]) => svg`<text class="name" x=${x} y=${y} textLength=${w} lengthAdjust="spacingAndGlyphs" font-size=${size} fill=${fill ?? "#262626"}>${t}</text>`)}
        ${SHEETS.map((s) => svg`<g transform=${s.at}>
          <path class="line tract" d=${meander(s.tract, 10, 3.6)}></path>
          <path class="line county" d=${trace(s.county)}></path>
        </g>`)}
      </svg>
      <div class="search">
        <svg class="glass" viewBox="0 0 64 64"><circle cx="27" cy="28" r="9.2"></circle><path d="M33.5 34.5L43 44"></path></svg>
      </div>
      <div class="scale">
        <div class="km"><fit-text span="67">20 km</fit-text></div>
        <div class="mi"><fit-text span="61">20 mi</fit-text></div>
      </div>`;
  }
}

/* ---------- charts ---------- */
type Entry = { color: string; pct: string; pw: number; lines: [string, number][] };
type Slice = [string, number];

const WHITE: [string, number][] = [["White alone, not", 134], ["Hispanic or Latino", 147], ["Population", 87]];
const BLACK: [string, number][] = [["Black or African", 127], ["American alone, not", 164], ["Hispanic or Latino", 147], ["Population", 87]];
const NATIVE: [string, number][] = [["American Indian and", 170], ["Alaska Native alone,", 164], ["not Hispanic or Latino", 178], ["Population", 87]];
const ASIAN: [string, number][] = [["Asian alone, not", 131], ["Hispanic or Latino", 147], ["Population", 87]];

@customElement("race-chart")
class RaceChart extends LitElement {
  @property({ attribute: false }) slices: Slice[] = [];
  @property({ attribute: false }) entries: Entry[] = [];
  @property({ type: Number }) radius = 100;
  @property({ type: Number }) thumb = 100;
  static styles = css`
    :host { display: flex; overflow: hidden; }
    .plot { width: 370px; margin-left: 57px; padding-top: 29px; display: flex; align-items: center; justify-content: center; }
    .pie { display: block; flex: none; }
    .legend { width: 327px; margin-left: 83px; padding-top: 15.4px; display: flex; flex-direction: column; gap: 31.6px; overflow: hidden; box-sizing: border-box; height: calc(100% - 1px); }
    .entry { flex: none; display: grid; grid-template-columns: 30px 202px 1fr; column-gap: 8.6px; align-items: center; font-size: 18px; line-height: 31.6px; color: #151515; }
    .swatch { width: 30px; height: 30px; border-radius: 7px; margin-top: -2px; }
    .row { display: block; height: 31.6px; }
    .pct { padding-bottom: 4px; }
    .track { width: 24px; background: #f9f9f9; border-radius: 12px; padding: 0 1px; box-sizing: border-box; }
    .thumb { background: #d9d9d9; border-radius: 11px; box-shadow: 0 0 0 2px #fff; }
  `;
  private wedge(from: number, to: number) {
    const r = this.radius;
    const at = (p: number) => {
      const a = (p / 100) * Math.PI * 2;
      return `${(r + r * Math.sin(a)).toFixed(2)} ${(r - r * Math.cos(a)).toFixed(2)}`;
    };
    return `M${r} ${r}L${at(from)}A${r} ${r} 0 ${to - from > 50 ? 1 : 0} 1 ${at(to)}Z`;
  }
  render() {
    let sum = 0;
    const d = this.radius * 2;
    return html`
      <div class="plot">
        <svg class="pie" width=${d} height=${d} viewBox="0 0 ${d} ${d}">
          ${this.slices.map(([color, v]) => {
            const from = sum;
            sum += v;
            return svg`<path fill=${color} d=${this.wedge(from, sum)}></path>`;
          })}
        </svg>
      </div>
      <div class="legend">
        ${this.entries.map((e) => html`
          <div class="entry">
            <div class="swatch" style="background:${e.color}"></div>
            <div>${e.lines.map(([t, w]) => html`<span class="row"><fit-text span=${w}>${t}</fit-text></span>`)}</div>
            <div class="pct"><fit-text span=${e.pw}>${e.pct}</fit-text></div>
          </div>`)}
      </div>
      <div class="track"><div class="thumb" style="height:${this.thumb}px"></div></div>`;
  }
}

const GREEN = "#9ad49a", TEAL = "#60ad9b", DARK = "#5a8763", YELLOW = "#fdea96";
const LIGHT = "#bbb0a6", BROWN = "#998876", PURPLE = "#87769a";

const AREA: Slice[] = [[GREEN, 55.94], [TEAL, 22.6], [DARK, 0.48], [YELLOW, 4.85], [LIGHT, 0.7], [BROWN, 4.13], [PURPLE, 11.3]];
const STATE: Slice[] = [[TEAL, 60.65], [GREEN, 20.29], [DARK, 0.85], [YELLOW, 3.13], [LIGHT, 0.5], [BROWN, 3.68], [PURPLE, 10.9]];
const AREA_KEY: Entry[] = [
  { color: GREEN, pct: "55.94%", pw: 61, lines: WHITE },
  { color: TEAL, pct: "22.6%", pw: 50, lines: BLACK },
  { color: DARK, pct: "0.48%", pw: 50, lines: NATIVE },
  { color: YELLOW, pct: "4.95%", pw: 50, lines: ASIAN },
];
const STATE_KEY: Entry[] = [
  { color: TEAL, pct: "60.65%", pw: 61, lines: WHITE },
  { color: GREEN, pct: "20.29%", pw: 61, lines: BLACK },
  { color: DARK, pct: "0.85%", pw: 50, lines: NATIVE },
];

/* ---------- indicator card ---------- */
type Row = { text: string; size: number; span: number; gap: number; kind: string };

@customElement("stat-card")
class StatCard extends LitElement {
  @property({ attribute: false }) rows: Row[] = [];
  @property() stamp = "";
  static styles = css`
    :host { display: flex; flex-direction: column; align-items: center; flex: none; box-sizing: border-box; border: 2px solid #ddd; background: #e0f5e0; color: #151515; }
    .row { line-height: 60px; flex: none; margin-left: -2px; }
    .title { font-weight: 500; -webkit-text-stroke: .5px #151515; }
    .plain { font-weight: 400; line-height: 50px; }
    .number { font-weight: 700; line-height: 110px; }
    .strong { font-weight: 700; }
    .stamp { margin: auto 0 1.4px 8px; align-self: flex-start; font: italic 20px/24px Lato, "Open Sans", sans-serif; }
  `;
  render() {
    return html`
      ${this.rows.map((r) => html`<fit-text class="row ${r.kind}" span=${r.span} style="font-size:${r.size}px;margin-top:${r.gap}px">${r.text}</fit-text>`)}
      <fit-text class="stamp" span="260">${this.stamp}</fit-text>`;
  }
}

const HEART: Row[] = [
  { text: "Average of Heart Disease Deaths", size: 49, span: 739, gap: 2.3, kind: "title" },
  { text: "159.505", size: 123, span: 488, gap: 6, kind: "number" },
  { text: "State Average 163.7", size: 48, span: 455, gap: 1, kind: "title" },
];
const BIRTH: Row[] = [
  { text: "Average of PreTerm Birth Rate", size: 52, span: 721, gap: 3, kind: "title" },
  { text: "10.147", size: 132, span: 438, gap: 12, kind: "number" },
  { text: "State Average = 10", size: 52, span: 461, gap: 6.6, kind: "title" },
];
const STROKE: Row[] = [
  { text: "Average Deaths caused by Stroke", size: 50, span: 781, gap: 3, kind: "title" },
  { text: "42.653", size: 128, span: 429, gap: 8.6, kind: "number" },
  { text: "State Average 43.1", size: 50, span: 440, gap: 6, kind: "title" },
];
const ASTHMA: Row[] = [
  { text: "Hospitalizations due to Asthma", size: 39.5, span: 566, gap: 12.4, kind: "plain" },
  { text: "51 (Ages 0-14) - State Average 28", size: 49, span: 779, gap: 28.6, kind: "strong" },
  { text: "153 (Total) - State Average 90", size: 56.5, span: 777, gap: 7, kind: "title" },
];

/* ---------- body copy ---------- */
type Line = [string, number, boolean?];
const COPY: Line[] = [
  ["Environmental Justice Tool Maps", 426, true],
  ["The three maps above can be toggled for additional information on", 861],
  ["demographics, facilities, and sensitive receptors (these are areas where the", 952],
  ["occupants are more susceptible to the adverse effects of exposure to toxic", 946],
  ["chemicals, pesticides, and other pollutants). Pop-ups on the map display", 919],
  ["the information. Click on a block group, or facility, sensitive receptor for", 906],
  ["more information.", 230],
  ["", 0],
  ["Demographic and Health Data", 396, true],
  ["The Demographic Dashboard displays information on the census tract level", 959],
  ["from the 2023 5-year estimate American Community Survey (ACS).  The", 908],
  ["North Carolina Department of Health and Human Services (NCDHHS)", 884],
  ["provides health data at the county level, so data shown on the dashboard", 931],
  ["for health rates tell the overall county average, not the census block group", 942],
  ["average. The data shown in the graphics are an average of all the block", 904],
  ["groups (or counties for health data) included on the above map extent.", 902],
];

@customElement("app-root")
class AppRoot extends LitElement {
  static styles = css`
    :host { display: grid; grid-template-columns: 1009px 899px 900px; column-gap: 16px; box-sizing: border-box; width: 2850px; height: 1466px; padding: 4px 8px 0 2px; overflow: hidden; background: #f7f7f7; color: #151515; font-family: Lato, "Open Sans", sans-serif; }
    .col { display: flex; flex-direction: column; min-width: 0; height: 1462px; overflow: hidden; }
    .box { flex: none; box-sizing: border-box; border: 2px solid #ddd; background: #fff; }
    .map { height: 816px; padding-right: 1px; }
    .credits { display: flex; justify-content: space-between; align-items: flex-start; height: 30px; padding: 0 10px 0 11px; font-size: 24px; line-height: 27px; color: #323232; }
    .esri { color: #151515; }
    .tabs { flex: none; display: flex; gap: 16px; margin-top: -2px; padding-left: 32px; align-items: flex-start; }
    .tab { box-sizing: border-box; height: 74px; margin-top: 2px; padding: 0 33px 0 32px; border: 2px solid #ddd; border-top: 0; border-bottom-width: 4px; background: #fff; font-size: 27px; line-height: 66px; white-space: nowrap; }
    .tab.on { height: 76px; margin-top: 0; padding-top: 2px; border-bottom-color: #3478bf; }
    .first { width: 373px; }
    .next { width: 345px; }
    .prose { margin-top: 18px; flex: 1 0 0; display: flex; justify-content: space-between; border-bottom: 0; }
    .copy { padding: 8.5px 0 0 12px; font-size: 27px; line-height: 34px; }
    .para { height: 34px; }
    .bold { font-weight: 700; }
    .bar { width: 15px; background: #c8c8c8; }
    .head { height: 57px; display: flex; overflow: hidden; background: #9fd69c; }
    .caption { flex: 1; text-align: center; font-size: 39.5px; font-weight: 700; line-height: 60px; padding-top: 4.4px; height: 60px; }
    .ink { color: #000; }
    .gutter { width: 13px; background: #ddd; }
    .grip { height: 40px; background: #c6c6c6; }
    .second { height: 56px; margin-top: 18px; }
    .chart { display: flex; flex-direction: column; margin-top: 16px; }
    .chart-a { height: 636px; }
    .chart-b { height: 583px; }
    .plot-a { height: 499px; }
    .plot-b { height: 447px; }
    .heart { height: 268px; margin-top: 16px; }
    .birth { height: 283px; margin-top: 19px; }
    .stroke { height: 277px; margin-top: 18px; }
    .asthma { height: 278px; margin-top: 18px; }
    .title { font-size: 27px; line-height: 36px; padding: 12.6px 0 0 15.6px; color: #323232; height: 94px; box-sizing: border-box; }
    .stamp { font-size: 20px; line-height: 24px; font-style: italic; margin-top: auto; padding: 0 0 1.4px 7.4px; }
    .picker { flex: none; box-sizing: border-box; height: 76px; margin: -2px 24px 0; border: 2px solid #ddd; border-top: 0; background: #fff; display: flex; align-items: center; justify-content: space-between; padding: 0 26px 0 25px; color: #6a6a6a; font-size: 24px; }
    .arrow { width: 11px; height: 20px; fill: #666; display: block; margin-top: 1px; }
    .choice { padding: 0 0 7px 49px; }
  `;

  private tabs(items: [string, number][], on = 0) {
    return html`<div class="tabs">${items.map(([t, w], i) => html`<div class="tab ${i === on ? "on" : ""}"><fit-text span=${w}>${t}</fit-text></div>`)}</div>`;
  }
  private header(text: string, span: number, cls = "") {
    return html`<div class="box head ${cls}"><div class="caption"><fit-text span=${span}>${text}</fit-text></div><div class="gutter"><div class="grip"></div></div></div>`;
  }
  private picker(text: string, span: number) {
    return html`<div class="picker">
      <svg class="arrow" viewBox="0 0 11 20"><path d="M11 0V20L0 10Z"></path></svg>
      <fit-text class="choice" span=${span}>${text}</fit-text>
      <svg class="arrow" viewBox="0 0 11 20"><path d="M0 0V20L11 10Z"></path></svg>
    </div>`;
  }

  render() {
    return html`
      <div class="col">
        <div class="box map">
          <area-map></area-map>
          <div class="credits">
            <fit-text span="782">Map data © OpenStreetMap contributors, Microsoft, Facebook, Inc. an…</fit-text>
            <fit-text class="esri" span="174">Powered by Esri</fit-text>
          </div>
        </div>
        ${this.tabs([["Community Map", 212], ["Facility Map", 150], ["Sensitive Receptors", 248]])}
        <div class="box prose">
          <div class="copy">
            ${COPY.map(([t, w, b]) => html`<div class="para ${b ? "bold" : ""}"><fit-text span=${w}>${t}</fit-text></div>`)}
          </div>
          <div class="bar"></div>
        </div>
      </div>

      <div class="col">
        ${this.header("Selected Area Demographics", 542, "ink")}
        <div class="box chart chart-a">
          <div class="title"><fit-text span="385">ACS Race and Hispanic Origin</fit-text></div>
          <race-chart class="plot-a" .slices=${AREA} .entries=${AREA_KEY} .radius=${183.5} .thumb=${231}></race-chart>
          <div class="stamp"><fit-text span="260">Last update: 43 seconds ago</fit-text></div>
        </div>
        ${this.picker("Race/Ethnicity", 156)}
        ${this.header("Statewide Demographics", 469, "second")}
        <div class="box chart chart-b">
          <div class="title"><fit-text span="385">ACS Race and Hispanic Origin</fit-text></div>
          <race-chart class="plot-b" .slices=${STATE} .entries=${STATE_KEY} .radius=${167} .thumb=${186}></race-chart>
          <div class="stamp"><fit-text span="236">Last update: 1 minute ago</fit-text></div>
        </div>
        <div class="picker"></div>
      </div>

      <div class="col">
        ${this.header("Health Dashboard", 337)}
        <stat-card class="heart" .rows=${HEART} stamp="Last update: 40 seconds ago"></stat-card>
        ${this.tabs([["Heart Disease", 176], ["Cancer", 92], ["Diabetes", 114]])}
        <stat-card class="birth" .rows=${BIRTH} stamp="Last update: 40 seconds ago"></stat-card>
        ${this.picker("PreTerm Birth Rate", 201)}
        <stat-card class="stroke" .rows=${STROKE} stamp="Last update: 40 seconds ago"></stat-card>
        ${this.tabs([["Stroke", 80], ["Cardiovascular Disease", 297]])}
        <stat-card class="asthma" .rows=${ASTHMA} stamp="Last update: 27 seconds ago"></stat-card>
        <div class="tabs"><div class="tab on first"></div><div class="tab next"></div></div>
      </div>`;
  }
}
